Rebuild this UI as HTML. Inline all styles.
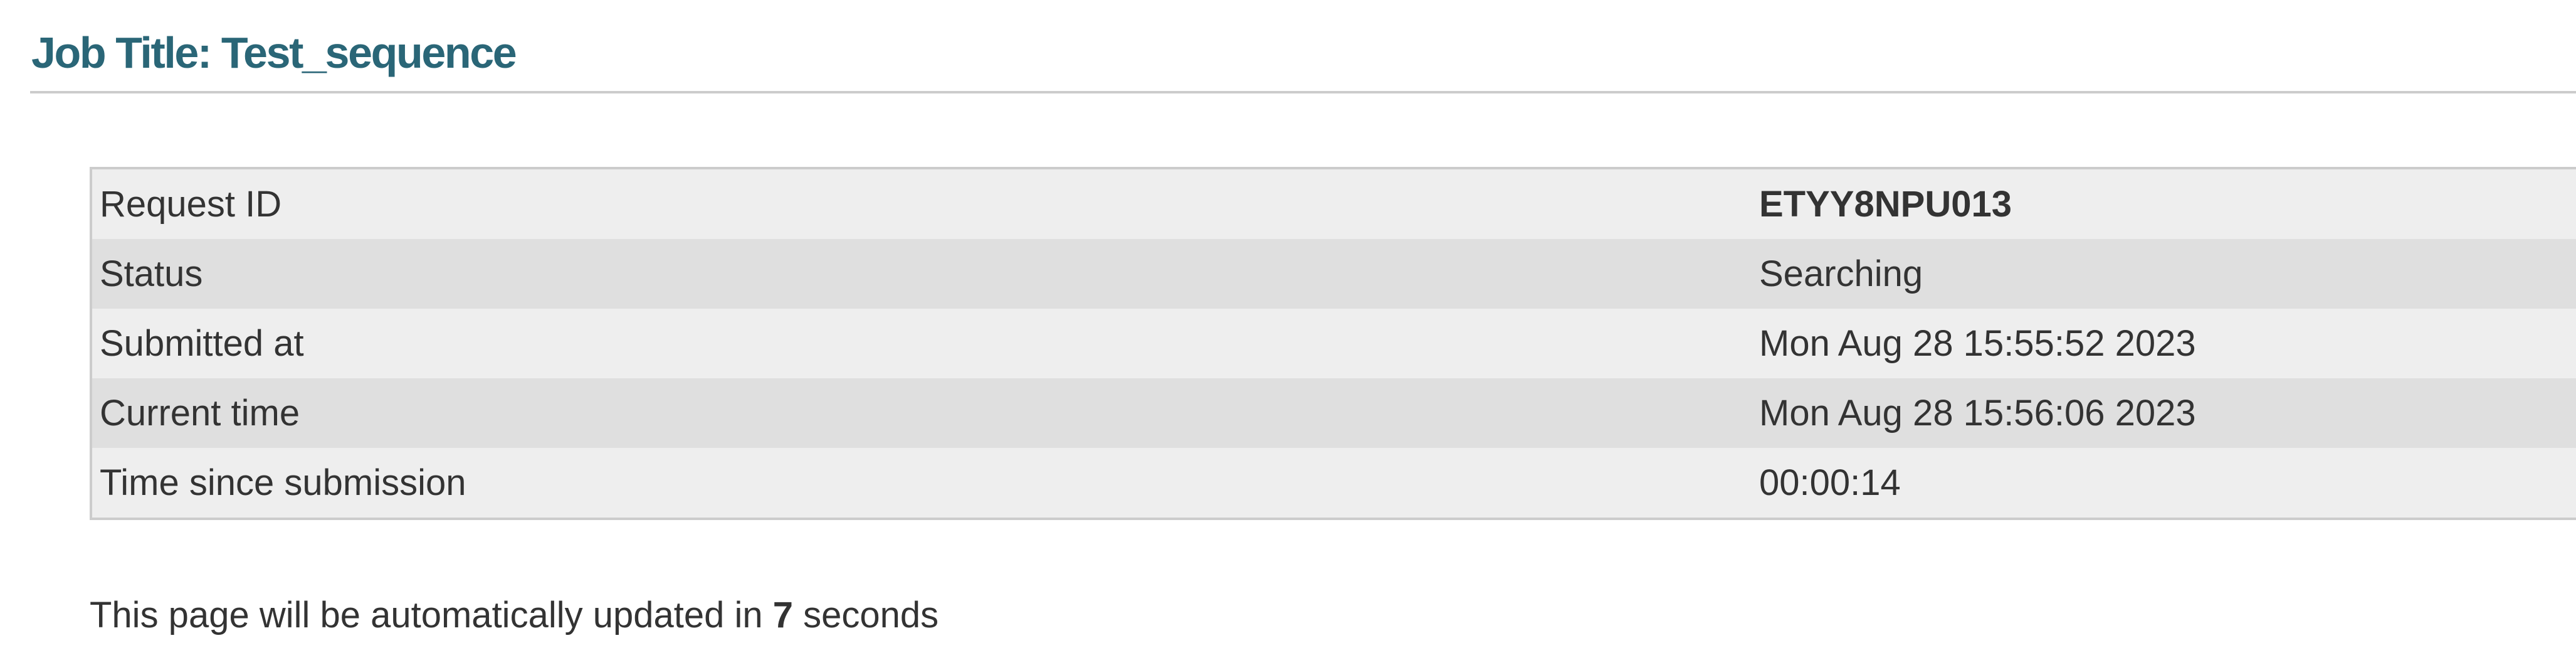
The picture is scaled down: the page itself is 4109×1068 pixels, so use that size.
<!DOCTYPE html>
<html><head><meta charset="utf-8"><style>
html,body{margin:0;padding:0;background:#fff;width:4109px;height:1068px;overflow:hidden;font-family:"Liberation Sans",Arial,sans-serif;color:#333}
.t{position:absolute;left:50px;top:0;font-size:70px;font-weight:bold;color:#2a6677;letter-spacing:-2.4px;line-height:1;white-space:nowrap}
.hr{position:absolute;left:48px;top:145px;width:4061px;height:4px;background:#ccc}
.tb{position:absolute;left:143px;top:266px;width:3990px;border:4px solid #ccc;border-right:none}
.r{height:111px;position:relative;font-size:58px;line-height:111px;white-space:nowrap}
.r:nth-child(odd){background:#eee}.r:nth-child(even){background:#dfdfdf}
.a{position:absolute;left:12px;top:0}
.b{position:absolute;left:2659px;top:0}
.f{position:absolute;left:143px;top:0;font-size:58px;white-space:nowrap;line-height:1}
</style></head><body>
<div class="t" style="top:49px">Job Title: Test_sequence</div>
<div class="hr"></div>
<div class="tb">
<div class="r"><span class="a">Request ID</span><span class="b"><b>ETYY8NPU013</b></span></div>
<div class="r"><span class="a">Status</span><span class="b">Searching</span></div>
<div class="r"><span class="a">Submitted at</span><span class="b">Mon Aug 28 15:55:52 2023</span></div>
<div class="r"><span class="a">Current time</span><span class="b">Mon Aug 28 15:56:06 2023</span></div>
<div class="r"><span class="a">Time since submission</span><span class="b">00:00:14</span></div>
</div>
<div class="f" style="top:952px">This page will be automatically updated in <b>7</b> seconds</div>
</body></html>
